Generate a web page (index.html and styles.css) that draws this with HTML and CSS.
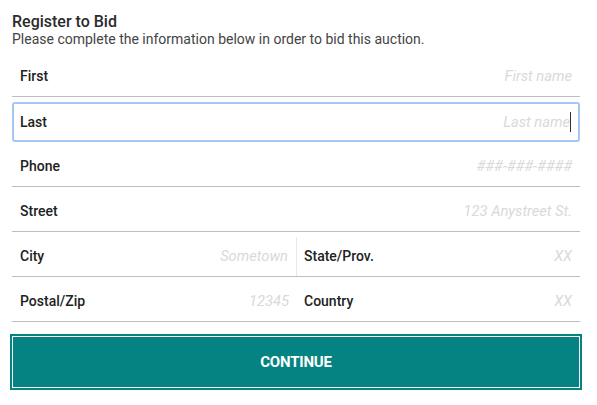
FILE: index.html
```html
<!DOCTYPE html>
<html>
<head>
<meta charset="utf-8">
<link rel="stylesheet" href="styles.css">
</head>
<body>
<div class="page">
  <h1 class="title">Register to Bid</h1>
  <p class="subtitle">Please complete the information below in order to bid this auction.</p>
  <div class="form">
    <div class="row">
      <div class="field"><span class="label">First</span><span class="ph">First name</span></div>
    </div>
    <div class="row row-focus">
      <div class="field focus"><span class="label">Last</span><span class="ph">Last name<span class="caret"></span></span></div>
    </div>
    <div class="row">
      <div class="field"><span class="label">Phone</span><span class="ph">###-###-####</span></div>
    </div>
    <div class="row">
      <div class="field"><span class="label">Street</span><span class="ph">123 Anystreet St.</span></div>
    </div>
    <div class="row split">
      <div class="field half left divided"><span class="label">City</span><span class="ph">Sometown</span></div>
      <div class="field half right"><span class="label">State/Prov.</span><span class="ph">XX</span></div>
    </div>
    <div class="row split">
      <div class="field half left"><span class="label">Postal/Zip</span><span class="ph">12345</span></div>
      <div class="field half right"><span class="label">Country</span><span class="ph">XX</span></div>
    </div>
    <button class="btn">CONTINUE</button>
  </div>
</div>
</body>
</html>
```
FILE: styles.css
```css
* { box-sizing: border-box; }
html, body { margin: 0; padding: 0; background: #fff; }
body { font-family: Roboto, "Liberation Sans", Arial, sans-serif; color: #222; }
.page { width: 597px; padding: 12px 17px 0 12px; }
.title { margin: 0; font-size: 16px; line-height: 19px; font-weight: 500; color: #2b2b2b; }
.subtitle { margin: 0; font-size: 14px; line-height: 16px; color: #444; }
.form { margin-top: 5px; width: 568px; }
.row { display: flex; height: 45px; border-bottom: 1px solid #bdbdbd; }
.field { flex: 1; display: flex; justify-content: space-between; align-items: center; padding: 4px 8px 0 8px; font-size: 14px; line-height: 40px; }
.label { font-weight: 500; color: #222; }
.ph { font-style: italic; font-size: 14.7px; color: #d9d9d9; display: flex; align-items: center; }
.row-focus { border-bottom: none; padding-top: 5px; }
.field.focus { border: 2px solid #a5c5f7; border-radius: 3px; padding: 0 7px 0 6px; line-height: 36px; height: 40px; }
.caret { display: inline-block; width: 1px; height: 20px; background: #333; }
.split .half { flex: none; }
.split .left { width: 285px; }
.split .right { width: 283px; padding-left: 7px; }
.split .divided { margin-top: 5px; padding-top: 0; border-right: 1px solid #e8e8e8; line-height: 39px; }
.btn { display: block; margin: 12px 0 0 -2px; width: 572px; height: 56px; background: #058383; border: 2px solid #058383; box-shadow: inset 0 0 0 1px #fff; color: #fff; font-family: Roboto, "Liberation Sans", Arial, sans-serif; font-weight: 700; font-size: 15px; letter-spacing: -0.2px; padding: 0; cursor: pointer; }
```
